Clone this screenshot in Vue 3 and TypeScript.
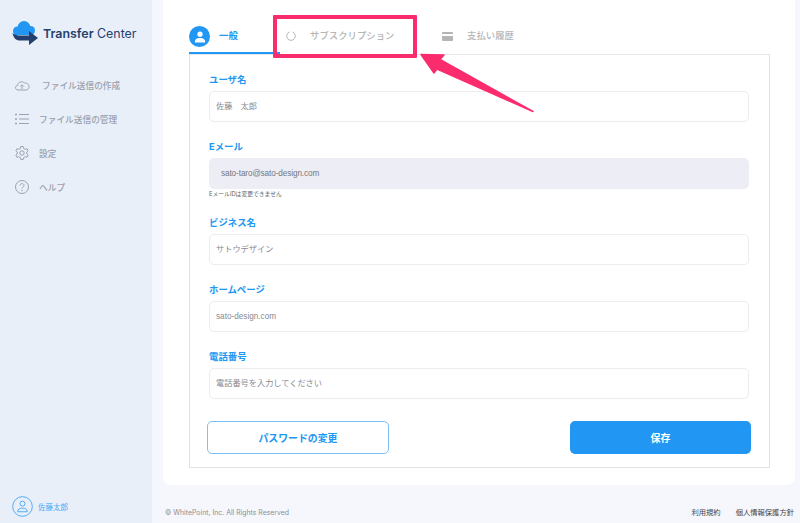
<template>
  <div class="page">
    <aside class="sidebar">
      <div class="logo">
        <svg width="28" height="26" viewBox="0 0 28 26">
          <g fill="#2196f3">
            <circle cx="12" cy="7.500" r="6.500" />
            <circle cx="5.500" cy="11" r="4.500" />
            <circle cx="18.500" cy="10.500" r="4.500" />
            <rect x="5" y="9" width="14" height="6" />
          </g>
          <path d="M.5 13 C1.500 18 4 20.500 8 20.500 L17 20.500 L17 25 L26 18 L17 11 L17 15.500 L8 15.500 C5 15.500 3 15 .5 13 Z" fill="#24406f" />
        </svg>
        <span class="logo-text"><b>Transfer</b> Center</span>
      </div>
      <nav class="nav">
        <a v-for="item in navItems" :key="item.label" class="nav-item" :class="item.cls">
          <svg width="16" height="16" viewBox="0 0 16 16" fill="none" stroke="#9aa3b2" stroke-width="1">
            <template v-if="item.icon === 'cloud'">
              <path d="M4 13 C1 13 .5 9 3.500 8.500 C4 5 8 3.500 10.500 6 C13.500 5.500 15.500 8 15 10.500 C14.700 12 13.500 13 12 13 Z" />
              <path d="M8 12 V8 M6.300 9.500 L8 7.800 L9.700 9.500" />
            </template>
            <template v-else-if="item.icon === 'list'">
              <path d="M5 3.500 H15 M5 8 H15 M5 12.500 H15" />
              <circle cx="2" cy="3.500" r="1" fill="#9aa3b2" stroke="none" />
              <circle cx="2" cy="8" r="1" fill="#9aa3b2" stroke="none" />
              <circle cx="2" cy="12.500" r="1" fill="#9aa3b2" stroke="none" />
            </template>
            <template v-else-if="item.icon === 'gear'">
              <path d="M6.800 1.500 H9.200 L9.600 3.400 L11.200 4.300 L13 3.700 L14.200 5.800 L12.800 7 V9 L14.200 10.200 L13 12.300 L11.200 11.700 L9.600 12.600 L9.200 14.500 H6.800 L6.400 12.600 L4.800 11.700 L3 12.300 L1.800 10.200 L3.200 9 V7 L1.800 5.800 L3 3.700 L4.800 4.300 L6.400 3.400 Z" />
              <circle cx="8" cy="8" r="2.200" />
            </template>
            <template v-else>
              <circle cx="8" cy="8" r="6.500" />
              <path d="M6 6.500 C6 4 10 4 10 6.500 C10 8 8 8 8 9.500" />
              <circle cx="8" cy="11.500" r=".7" fill="#9aa3b2" stroke="none" />
            </template>
          </svg>
          <span>{{ item.label }}</span>
        </a>
      </nav>
      <div class="user">
        <svg width="21" height="21" viewBox="0 0 22 22" fill="none" stroke="#4da8f5" stroke-width="1">
          <circle cx="11" cy="11" r="10.300" />
          <circle cx="11" cy="8" r="2.600" />
          <path d="M6 16.500 C6 13.500 8 12.800 11 12.800 C14 12.800 16 13.500 16 16.500 Z" />
        </svg>
        <span>佐藤太郎</span>
      </div>
    </aside>

    <main class="main">
      <section class="card">
        <div class="tabs">
          <div class="tab tab-active">
            <span class="tab-avatar">
              <svg width="12" height="12" viewBox="0 0 12 12" fill="#fff">
                <circle cx="6" cy="3.200" r="2.600" />
                <path d="M.8 11.500 C.8 8 3 7 6 7 C9 7 11.200 8 11.200 11.500 Z" />
              </svg>
            </span>
            <span>一般</span>
          </div>
          <div class="tab tab-sub">
            <svg width="10" height="10" viewBox="0 0 10 10" fill="none" stroke="#b5b5b5" stroke-width="1">
              <path d="M3.500 1 A4.300 4.300 0 1 0 6.500 1" />
            </svg>
            <span>サブスクリプション</span>
          </div>
          <div class="tab tab-pay">
            <svg width="11" height="9" viewBox="0 0 11 9">
              <path d="M1 0 H10 Q11 0 11 1 V2 H0 V1 Q0 0 1 0 Z M0 4 H11 V8 Q11 9 10 9 H1 Q0 9 0 8 Z" fill="#b5b5b5" />
            </svg>
            <span>支払い履歴</span>
          </div>
        </div>

        <form class="panel" @submit.prevent>
          <div v-for="f in fields" :key="f.label" class="field">
            <label class="field-label">{{ f.label }}</label>
            <div class="input" :class="{ 'input-off': f.disabled }">{{ f.value }}</div>
            <p v-if="f.note" class="note">{{ f.note }}</p>
          </div>
          <div class="actions">
            <button type="button" class="btn btn-line">パスワードの変更</button>
            <button type="button" class="btn btn-fill">保存</button>
          </div>
        </form>
      </section>

      <footer class="footer">
        <span class="copy">© WhitePoint, Inc. All Rights Reserved</span>
        <span class="links">
          <a>利用規約</a>
          <a>個人情報保護方針</a>
        </span>
      </footer>
    </main>

    <!-- annotation drawn on top of the screenshot -->
    <div class="mark-box"></div>
    <svg class="mark-arrow" width="125" height="65" viewBox="0 0 125 65">
      <path d="M3 2.500 L26 3 L22 7.500 L115 59.500 L19 17 L16 21 Z" fill="#fb2c6e" stroke="#fb2c6e" stroke-width="1.500" stroke-linejoin="round" />
    </svg>
  </div>
</template>

<script setup lang="ts">
const navItems = [
  { label: 'ファイル送信の作成', icon: 'cloud', cls: 'nav-wide' },
  { label: 'ファイル送信の管理', icon: 'list', cls: '' },
  { label: '設定', icon: 'gear', cls: '' },
  { label: 'ヘルプ', icon: 'help', cls: '' },
]

const fields = [
  { label: 'ユーザ名', value: '佐藤　太郎' },
  { label: 'Eメール', value: 'sato-taro@sato-design.com', disabled: true, note: 'EメールIDは変更できません' },
  { label: 'ビジネス名', value: 'サトウデザイン' },
  { label: 'ホームページ', value: 'sato-design.com' },
  { label: '電話番号', value: '電話番号を入力してください' },
]
</script>

<style>
body {
  margin: 0;
}
</style>

<style scoped>
.page {
  position: relative;
  display: flex;
  width: 800px;
  height: 523px;
  overflow: hidden;
  background: #f6f7fc;
  font-family: Inter, "Noto Sans CJK JP", sans-serif;
}
.sidebar {
  flex: 0 0 152px;
  display: flex;
  flex-direction: column;
  background: #e9eff8;
}
.logo {
  display: flex;
  align-items: center;
  gap: 3px;
  padding: 20px 0 0 12px;
  height: 26px;
}
.logo-text {
  font-size: 12.4px;
  color: #24406f;
  white-space: nowrap;
}
.logo-text b {
  font-weight: 600;
}
.nav {
  display: flex;
  flex-direction: column;
  gap: 14px;
  margin-top: 29px;
  padding-left: 14px;
}
.nav-item {
  display: flex;
  align-items: center;
  gap: 9px;
  height: 20px;
  font-size: 8.700px;
  font-weight: 500;
  color: #9aa0ad;
}
.nav-wide {
  gap: 12px;
}
.user {
  display: flex;
  align-items: center;
  gap: 5px;
  margin-top: auto;
  padding: 0 0 6px 12px;
  font-size: 7.500px;
  color: #4da8f5;
}
.main {
  flex: 1;
  display: flex;
  flex-direction: column;
  padding-left: 11px;
  padding-right: 5px;
}
.card {
  height: 485px;
  box-sizing: border-box;
  padding: 26px 25px 0 26px;
  background: #fff;
  border-radius: 0 0 8px 8px;
}
.tabs {
  display: flex;
  height: 28px;
}
.tab {
  display: flex;
  align-items: flex-start;
  font-size: 9.400px;
  font-weight: 500;
  color: #b5b5b5;
  box-sizing: border-box;
}
.tab-active {
  width: 91px;
  gap: 9px;
  color: #2196f3;
  font-weight: 600;
  border-bottom: 2px solid #2196f3;
}
.tab-active span:last-child {
  line-height: 20px;
}
.tab-avatar {
  display: flex;
  align-items: center;
  justify-content: center;
  width: 21px;
  height: 21px;
  border-radius: 50%;
  background: #2196f3;
}
.tab-sub {
  width: 162px;
  gap: 14px;
  padding-left: 6px;
}
.tab-sub span,
.tab-pay span {
  line-height: 20px;
}
.tab-sub svg {
  margin-top: 5px;
}
.tab-pay {
  gap: 14px;
}
.tab-pay svg {
  margin-top: 6px;
}
.panel {
  height: 414px;
  box-sizing: border-box;
  padding: 15px 20px 0 19px;
  border: 1px solid #e2e2e6;
  border-top-color: #e6e6ea;
}
.field {
  margin-bottom: 15px;
}
.field-label {
  display: block;
  height: 21px;
  line-height: 20px;
  font-size: 9.400px;
  font-weight: 700;
  color: #2196f3;
}
.input {
  box-sizing: border-box;
  height: 31px;
  padding-left: 6px;
  line-height: 29px;
  font-family: "Liberation Sans", "Noto Sans CJK JP", sans-serif;
  font-size: 8.200px;
  color: #8a8a8f;
  border: 1px solid #ececf0;
  border-radius: 5px;
  background: #fff;
}
.input-off {
  padding-left: 11px;
  letter-spacing: -0.1px;
  background: #ededf5;
  border-color: #ededf5;
  color: #77777c;
}
.note {
  margin: -1px 0 -1px;
  height: 11px;
  line-height: 11px;
  font-size: 5.800px;
  color: #666;
}
.actions {
  display: flex;
  justify-content: space-between;
  margin: 22px -2px 0;
}
.btn {
  height: 33px;
  box-sizing: border-box;
  border-radius: 5px;
  padding: 0;
  font-family: inherit;
  font-size: 9.900px;
  font-weight: 700;
}
.btn-line {
  width: 182px;
  background: #fff;
  color: #2196f3;
  border: 1px solid #7cc0f8;
}
.btn-fill {
  width: 181px;
  background: #2196f3;
  color: #fff;
  border: none;
}
.footer {
  display: flex;
  justify-content: space-between;
  align-items: center;
  height: 22px;
  margin-top: 16px;
  padding-left: 2px;
  font-size: 6.900px;
  color: #8e8e93;
}
.links {
  display: flex;
  gap: 15px;
  padding-right: 1px;
  font-size: 7.300px;
  color: #444;
}
.mark-box {
  position: absolute;
  left: 273px;
  top: 15px;
  width: 144px;
  height: 43px;
  box-sizing: border-box;
  border: 4px solid #fb2c6e;
  border-radius: 1px;
}
.mark-arrow {
  position: absolute;
  left: 418px;
  top: 52px;
}
</style>
